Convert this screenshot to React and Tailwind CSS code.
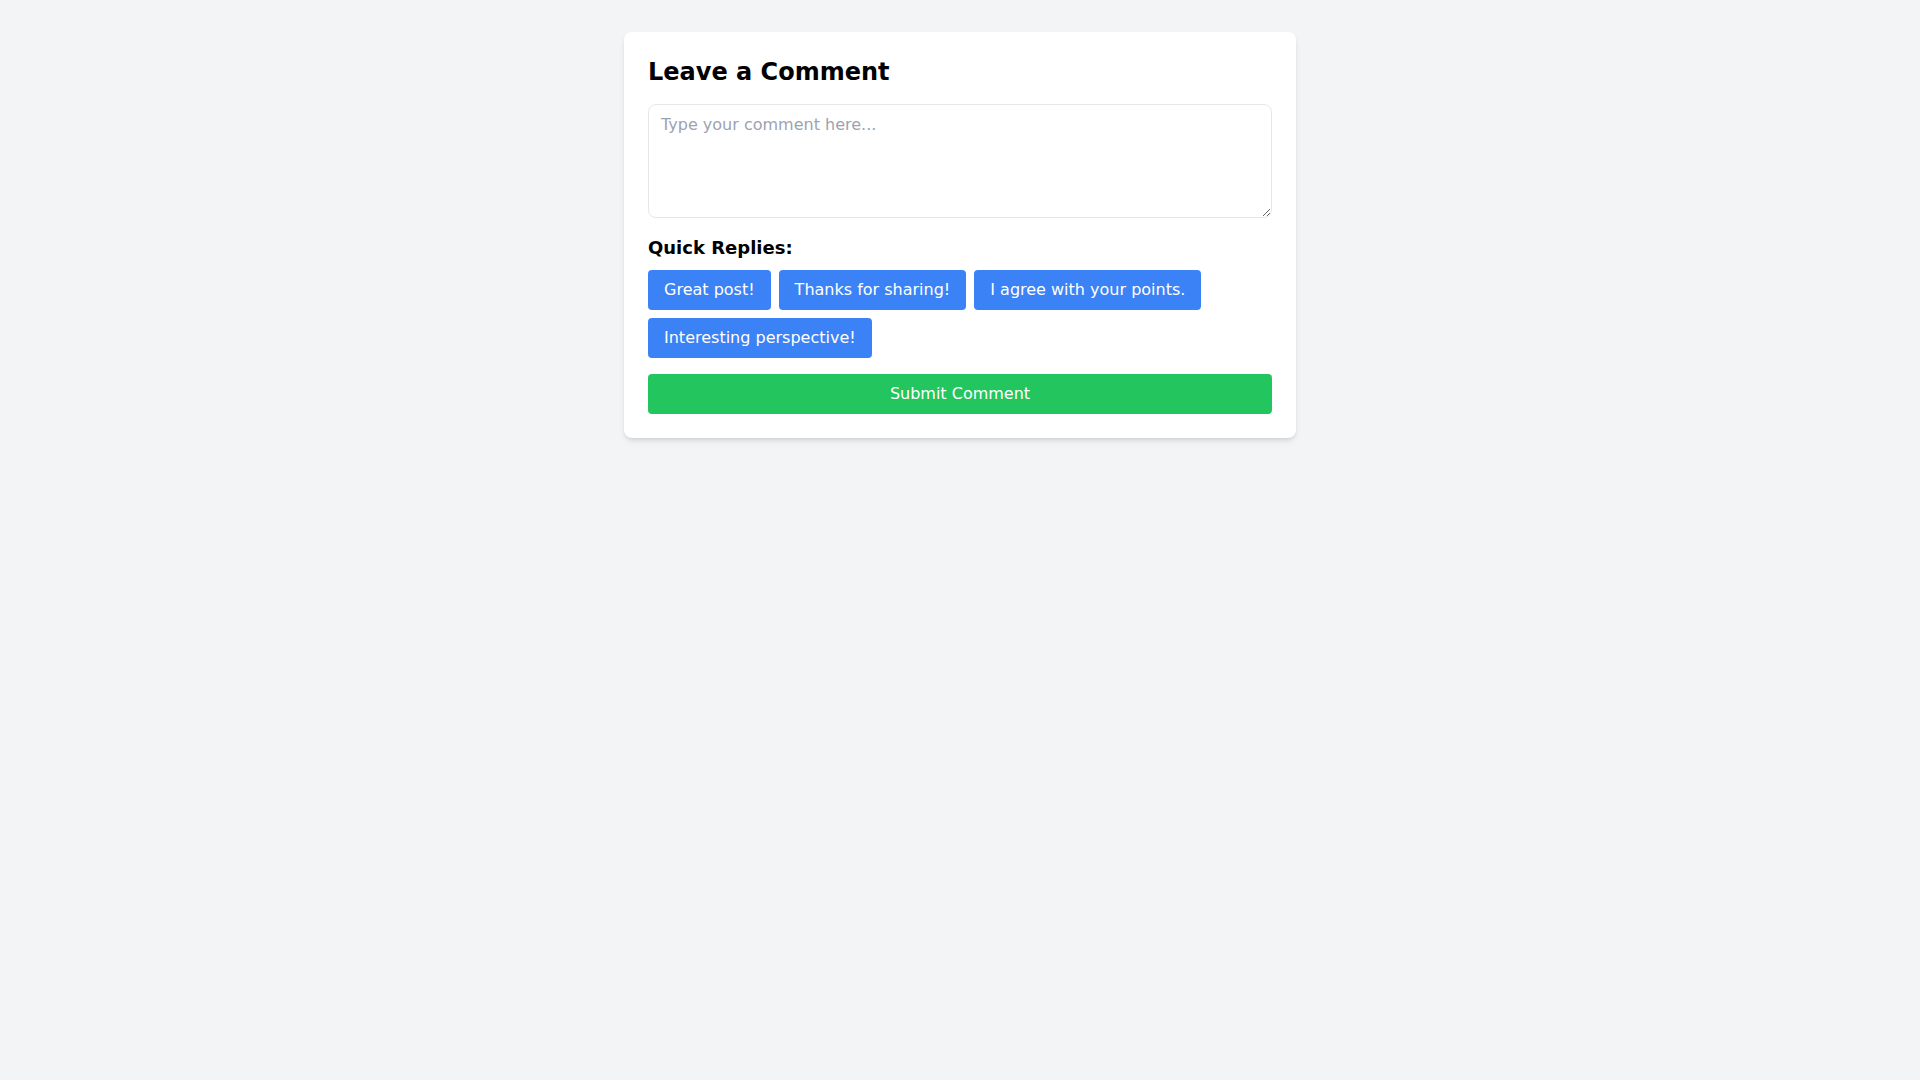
import { useState } from "react";

const QUICK_REPLIES = [
  "Great post!",
  "Thanks for sharing!",
  "I agree with your points.",
  "Interesting perspective!",
];

export default function App() {
  const [comment, setComment] = useState("");

  return (
    <div className="min-h-screen bg-[#f3f4f6] p-8 font-['DejaVu_Sans',sans-serif]">
      <div className="mx-auto max-w-2xl rounded-lg bg-white p-6 shadow-md">
        <h2 className="mb-4 text-2xl font-bold text-black">Leave a Comment</h2>
        <textarea
          rows={4}
          value={comment}
          onChange={(e) => setComment(e.target.value)}
          placeholder="Type your comment here..."
          className="block w-full rounded-lg border border-[#e5e7eb] px-3 py-2 text-base leading-6 text-black placeholder:text-[#9ca3af] focus:outline-none"
        />
        <h3 className="mt-4 mb-2 text-lg font-bold text-black">Quick Replies:</h3>
        <div className="flex flex-wrap gap-2">
          {QUICK_REPLIES.map((reply) => (
            <button
              key={reply}
              type="button"
              onClick={() => setComment(reply)}
              className="rounded bg-[#3b82f6] px-4 py-2 text-base leading-6 text-white hover:bg-[#2563eb]"
            >
              {reply}
            </button>
          ))}
        </div>
        <button
          type="button"
          className="mt-4 w-full rounded bg-[#22c55e] py-2 text-base leading-6 text-white hover:bg-[#16a34a]"
        >
          Submit Comment
        </button>
      </div>
    </div>
  );
}
